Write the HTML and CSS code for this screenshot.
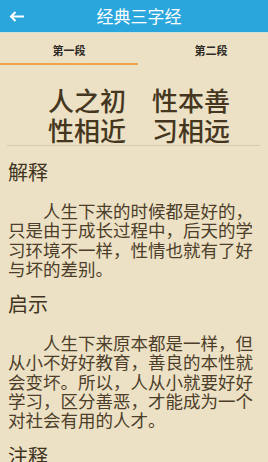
FILE: index.html
```html
<!DOCTYPE html>
<html lang="zh-CN">
<head>
  <meta charset="UTF-8">
  <meta name="viewport" content="width=device-width, initial-scale=1.0">
  <title>经典三字经</title>
  <link rel="stylesheet" href="styles.css">
</head>
<body>

  <header class="toolbar">
    <span class="back">
      <svg width="20" height="20" viewBox="0 0 20 20">
        <path d="M3 10.5H16M7.5 6L3 10.5L7.5 15" fill="none" stroke="#ffffff" stroke-width="2"/>
      </svg>
    </span>
    <h1 class="title">经典三字经</h1>
    <span></span>
  </header>

  <nav class="tabs">
    <div class="tab active">
      <span class="tab-label">第一段</span>
      <span class="indicator"></span>
    </div>
    <div class="tab second">
      <span class="tab-label">第二段</span>
    </div>
  </nav>

  <main class="content">
    <div class="verse">
      <p>人之初　性本善</p>
      <p>性相近　习相远</p>
    </div>

    <div class="section">
      <h2>解释</h2>
      <p>人生下来的时候都是好的，只是由于成长过程中，后天的学习环境不一样，性情也就有了好与坏的差别。</p>
    </div>

    <div class="section">
      <h2>启示</h2>
      <p>人生下来原本都是一样，但从小不好好教育，善良的本性就会变坏。所以，人从小就要好好学习，区分善恶，才能成为一个对社会有用的人才。</p>
    </div>

    <div class="section">
      <h2>注释</h2>
    </div>
  </main>

</body>
</html>
```

FILE: styles.css
```css
body {
  margin: 0;
  padding: 0;
  font-family: "Noto Sans CJK SC", "Noto Sans", sans-serif;
  background-color: #ece1c4; /* parchment */
  color: #4c3e2b;
  overflow: hidden;
}

.toolbar {
  display: grid;
  grid-template-columns: 40px 1fr 40px;
  align-items: center;
  height: 32px;
  background-color: #2aa6dd;
  box-shadow: 0 1px 0 #cfe0d6;
}

.back {
  display: flex;
  padding-left: 8px;
}

.title {
  margin: 0;
  padding-left: 10px;
  text-align: center;
  font-size: 17px;
  font-weight: normal;
  color: #ffffff;
  line-height: 32px;
}

.tabs {
  display: grid;
  grid-template-columns: 138px 1fr;
  padding-bottom: 1px;
}

.tab {
  display: flex;
  flex-direction: column;
  align-items: center;
  padding-top: 12px;
}

.tab-label {
  font-size: 11px;
  font-weight: bold;
  line-height: 12px;
  color: #2e2a24;
}

.second {
  padding-left: 16px;
}

.indicator {
  align-self: stretch;
  height: 2px;
  margin-top: 7px;
  background-color: #f0a54a; /* orange underline */
}

.content {
  padding: 0 8px;
}

.verse {
  margin: 19px 0 0 -1px;
  padding-left: 11px;
  border-bottom: 1px solid #d6caac;
  text-align: center;
}

.verse p {
  margin: 0;
  font-size: 26px;
  font-weight: 500;
  line-height: 30px;
  color: #45361f;
}

.section h2 {
  margin: 14px 0 17px;
  font-size: 20px;
  font-weight: normal;
  line-height: 24px;
  color: #3f3322;
}

.section p {
  margin: 0;
  font-size: 17.5px;
  line-height: 19.3px;
  text-indent: 2em;
}
```
